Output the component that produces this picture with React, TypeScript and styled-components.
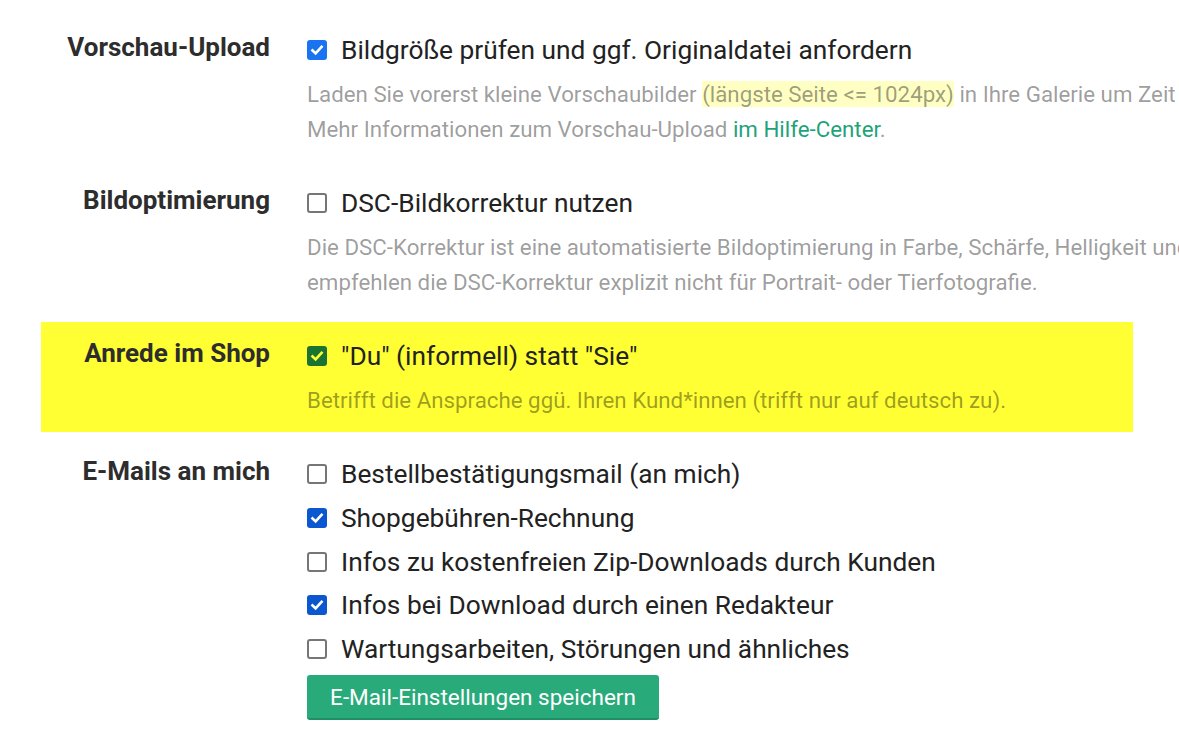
import React from "react";
import styled, { createGlobalStyle } from "styled-components";

const Global = createGlobalStyle`
  html, body { margin: 0; padding: 0; background: #fff; overflow: hidden; }
  body { font-family: Roboto, "Noto Sans", "Liberation Sans", sans-serif; }
  * { box-sizing: border-box; }
`;

const Page = styled.div`
  padding-top: 16px;
  width: 1179px;
  height: 740px;
  overflow: hidden;
`;

const Section = styled.section<{ $highlight?: boolean }>`
  display: grid;
  grid-template-columns: 229px 1fr;
  column-gap: 37px;
  margin-left: 41px;
  width: 1092px;
  padding: 16px 0 14px;
  margin-bottom: 8px;
  background: ${(p) => (p.$highlight ? "#ffff33" : "transparent")};
`;

const Label = styled.div`
  text-align: right;
  font-weight: 700;
  font-size: 26px;
  line-height: 30px;
  color: #2d2d2d;
  white-space: nowrap;
`;

const Content = styled.div`
  display: flex;
  flex-direction: column;
  min-width: 0;
`;

const List = styled.div`
  display: flex;
  flex-direction: column;
  gap: 7.75px;
`;

const CheckRow = styled.label`
  display: flex;
  align-items: center;
  gap: 14px;
  height: 36px;
  font-size: 26.3px;
  color: #222;
  white-space: nowrap;
`;

const Box = styled.span<{ $checked?: boolean; $color?: string }>`
  flex: 0 0 auto;
  width: 20px;
  height: 20px;
  border-radius: 3px;
  display: flex;
  align-items: center;
  justify-content: center;
  background: ${(p) => (p.$checked ? p.$color || "#0b57d0" : "#fff")};
  border: ${(p) => (p.$checked ? "none" : "2px solid #767676")};
`;

const Desc = styled.div`
  margin-top: 9px;
  font-size: 22.3px;
  line-height: 35px;
  color: rgba(0, 0, 0, 0.4);
`;

const Line = styled.div`
  white-space: nowrap;
`;

const Mark = styled.span`
  background: #ffffc4;
`;

const Link = styled.a`
  color: #1fa37b;
  text-decoration: none;
`;

const SaveButton = styled.button`
  margin-top: 8px;
  align-self: flex-start;
  width: 352px;
  height: 45px;
  border: none;
  border-bottom: 2px solid #1f8f66;
  border-radius: 3px;
  background: #29aa7b;
  color: #fff;
  font-family: Roboto, "Noto Sans", sans-serif;
  font-size: 22.5px;
  padding: 0;
`;

const Check: React.FC<{ checked?: boolean; color?: string; checkColor?: string }> = ({
  checked,
  color,
  checkColor = "#fff",
}) => (
  <Box $checked={checked} $color={color}>
    {checked && (
      <svg width="14" height="14" viewBox="0 0 14 14">
        <path
          d="M2.5 7.4 L5.6 10.3 L11.6 3.8"
          fill="none"
          stroke={checkColor}
          strokeWidth="2.6"
          strokeLinecap="square"
          strokeLinejoin="miter"
        />
      </svg>
    )}
  </Box>
);

const emails: { text: string; checked: boolean }[] = [
  { text: "Bestellbestätigungsmail (an mich)", checked: false },
  { text: "Shopgebühren-Rechnung", checked: true },
  { text: "Infos zu kostenfreien Zip-Downloads durch Kunden", checked: false },
  { text: "Infos bei Download durch einen Redakteur", checked: true },
  { text: "Wartungsarbeiten, Störungen und ähnliches", checked: false },
];

export default function App() {
  return (
    <Page>
      <Global />
      <Section>
        <Label>Vorschau-Upload</Label>
        <Content>
          <CheckRow>
            <Check checked color="#1a73f0" />
            Bildgröße prüfen und ggf. Originaldatei anfordern
          </CheckRow>
          <Desc>
            <Line>
              Laden Sie vorerst kleine Vorschaubilder <Mark>(längste Seite &lt;= 1024px)</Mark> in Ihre
              Galerie um Zeit zu sparen.
            </Line>
            <Line>
              Mehr Informationen zum Vorschau-Upload <Link href="#">im Hilfe-Center</Link>.
            </Line>
          </Desc>
        </Content>
      </Section>

      <Section>
        <Label>Bildoptimierung</Label>
        <Content>
          <CheckRow>
            <Check />
            DSC-Bildkorrektur nutzen
          </CheckRow>
          <Desc>
            <Line>
              Die DSC-Korrektur ist eine automatisierte Bildoptimierung in Farbe, Schärfe, Helligkeit und
              Kontrast. Wir
            </Line>
            <Line>empfehlen die DSC-Korrektur explizit nicht für Portrait- oder Tierfotografie.</Line>
          </Desc>
        </Content>
      </Section>

      <Section $highlight>
        <Label>Anrede im Shop</Label>
        <Content>
          <CheckRow>
            <Check checked color="#1a7330" checkColor="#ffff33" />
            "Du" (informell) statt "Sie"
          </CheckRow>
          <Desc>
            <Line>Betrifft die Ansprache ggü. Ihren Kund*innen (trifft nur auf deutsch zu).</Line>
          </Desc>
        </Content>
      </Section>

      <Section>
        <Label>E-Mails an mich</Label>
        <Content>
          <List>
            {emails.map((e) => (
              <CheckRow key={e.text}>
                <Check checked={e.checked} />
                {e.text}
              </CheckRow>
            ))}
          </List>
          <SaveButton>E-Mail-Einstellungen speichern</SaveButton>
        </Content>
      </Section>
    </Page>
  );
}
